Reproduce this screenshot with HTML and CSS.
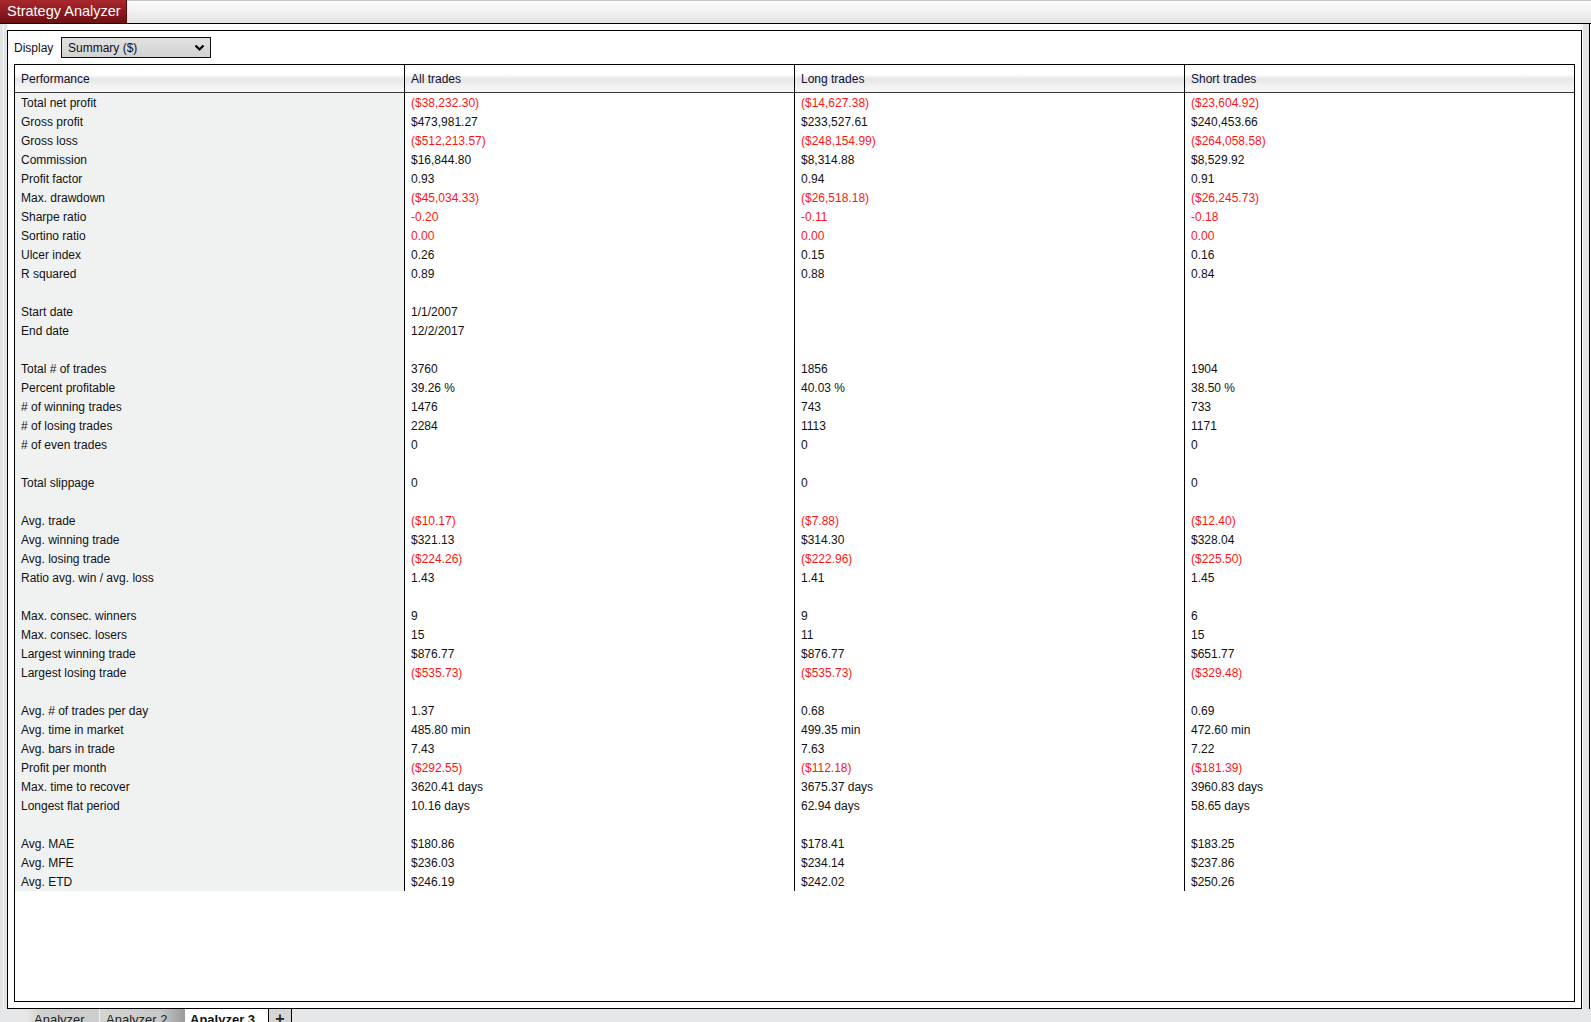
FILE: index.html
```html
<!DOCTYPE html>
<html>
<head>
<meta charset="utf-8">
<link rel="stylesheet" href="styles.css">
</head>
<body>
<div class="topbar">
  <div class="title-tab">Strategy Analyzer</div>
  <div class="topfill"></div>
</div>
<div class="workspace">
  <div class="leftstrip"></div>
  <div class="frame">
    <div class="display-row">
      <span class="display-label">Display</span>
      <div class="select">
        <span>Summary ($)</span>
        <svg class="chev" width="11" height="8" viewBox="0 0 11 8"><path d="M1.5 1.5 L5.5 5.5 L9.5 1.5" fill="none" stroke="#000" stroke-width="2.2"/></svg>
      </div>
    </div>
    <div class="table">
      <div class="row head">
        <div class="c">Performance</div><div class="c">All trades</div><div class="c">Long trades</div><div class="c">Short trades</div>
      </div>
      <div id="rows"></div>
    </div>
  </div>
  <div class="rightstrip"><div class="rightpanel"></div></div>
</div>
<div class="bottombar">
  <div class="btab t1">Analyzer</div>
  <div class="btab t2">Analyzer 2</div>
  <div class="btab t3">Analyzer 3</div>
  <div class="btab tplus">+</div>
</div>
<script src="app.js"></script>
</body>
</html>
```
FILE: app.js
```js
var data = [
 ["Total net profit","r($38,232.30)","r($14,627.38)","r($23,604.92)"],
 ["Gross profit","$473,981.27","$233,527.61","$240,453.66"],
 ["Gross loss","r($512,213.57)","r($248,154.99)","r($264,058.58)"],
 ["Commission","$16,844.80","$8,314.88","$8,529.92"],
 ["Profit factor","0.93","0.94","0.91"],
 ["Max. drawdown","r($45,034.33)","r($26,518.18)","r($26,245.73)"],
 ["Sharpe ratio","r-0.20","r-0.11","r-0.18"],
 ["Sortino ratio","r0.00","r0.00","r0.00"],
 ["Ulcer index","0.26","0.15","0.16"],
 ["R squared","0.89","0.88","0.84"],
 ["","","",""],
 ["Start date","1/1/2007","",""],
 ["End date","12/2/2017","",""],
 ["","","",""],
 ["Total # of trades","3760","1856","1904"],
 ["Percent profitable","39.26 %","40.03 %","38.50 %"],
 ["# of winning trades","1476","743","733"],
 ["# of losing trades","2284","1113","1171"],
 ["# of even trades","0","0","0"],
 ["","","",""],
 ["Total slippage","0","0","0"],
 ["","","",""],
 ["Avg. trade","r($10.17)","r($7.88)","r($12.40)"],
 ["Avg. winning trade","$321.13","$314.30","$328.04"],
 ["Avg. losing trade","r($224.26)","r($222.96)","r($225.50)"],
 ["Ratio avg. win / avg. loss","1.43","1.41","1.45"],
 ["","","",""],
 ["Max. consec. winners","9","9","6"],
 ["Max. consec. losers","15","11","15"],
 ["Largest winning trade","$876.77","$876.77","$651.77"],
 ["Largest losing trade","r($535.73)","r($535.73)","r($329.48)"],
 ["","","",""],
 ["Avg. # of trades per day","1.37","0.68","0.69"],
 ["Avg. time in market","485.80 min","499.35 min","472.60 min"],
 ["Avg. bars in trade","7.43","7.63","7.22"],
 ["Profit per month","r($292.55)","r($112.18)","r($181.39)"],
 ["Max. time to recover","3620.41 days","3675.37 days","3960.83 days"],
 ["Longest flat period","10.16 days","62.94 days","58.65 days"],
 ["","","",""],
 ["Avg. MAE","$180.86","$178.41","$183.25"],
 ["Avg. MFE","$236.03","$234.14","$237.86"],
 ["Avg. ETD","$246.19","$242.02","$250.26"]
];
var host = document.getElementById("rows");
data.forEach(function (r) {
  var row = document.createElement("div");
  row.className = "row";
  r.forEach(function (v, i) {
    var c = document.createElement("div");
    c.className = "c";
    if (i > 0 && v.charAt(0) === "r") { c.className += " neg"; v = v.slice(1); }
    c.textContent = v;
    row.appendChild(c);
  });
  host.appendChild(row);
});
```
FILE: styles.css
```css
html, body {
  margin: 0;
  padding: 0;
}
body {
  width: 1591px;
  height: 1022px;
  overflow: hidden;
  background: #e6e7e8;
  font-family: "Liberation Sans", Arial, sans-serif;
  font-size: 12px;
  color: #111;
}
.topbar {
  display: flex;
  height: 23px;
  border-bottom: 1px solid #000;
}
.title-tab {
  width: 119px;
  height: 23px;
  padding-left: 7px;
  background: linear-gradient(to bottom, #a8282d 0%, #8e1a1f 50%, #6f1014 100%);
  color: #fff;
  font-size: 14.5px;
  line-height: 23px;
  white-space: nowrap;
  border-right: 1px solid #5a0c0f;
}
.topfill {
  flex: 1;
  border-top: 1px solid #c4c4c4;
  background: linear-gradient(to bottom, #fbfbfb 0%, #eeeeee 60%, #e4e5e6 100%);
}
.workspace {
  display: flex;
  height: 985px;
  background: #fff;
}
.leftstrip {
  width: 7px;
  background: linear-gradient(to right, #e2e3e4 0, #e2e3e4 3px, #f4f4f4 3px, #f4f4f4 4px, #e2e3e4 4px);
}
.frame {
  margin-top: 6px;
  width: 1561px;
  height: 965px;
  border: 1px solid #000;
  padding: 6px;
  background: #fff;
  display: flex;
  flex-direction: column;
  gap: 6px;
}
.display-row {
  display: flex;
  align-items: center;
  height: 21px;
}
.display-label {
  width: 47px;
}
.select {
  box-sizing: border-box;
  width: 150px;
  height: 21px;
  border: 1px solid #111;
  background: linear-gradient(to bottom, #e2e2e2 0%, #d2d2d2 100%);
  display: flex;
  align-items: center;
  padding-left: 6px;
  padding-right: 5px;
  justify-content: space-between;
}
.chev {
  display: block;
}
.table {
  box-sizing: border-box;
  width: 1561px;
  height: 938px;
  border: 1px solid #000;
}
.row {
  display: grid;
  grid-template-columns: 389px 390px 390px 390px;
  height: 19px;
}
.row .c {
  box-sizing: border-box;
  height: 19px;
  padding-left: 6px;
  padding-top: 1px;
  line-height: 19px;
  white-space: nowrap;
  overflow: hidden;
}
.row .c + .c {
  border-left: 1px solid #000;
}
.row .c:first-child {
  background: #f0f2f2;
}
.row.head {
  height: 27px;
  border-bottom: 1px solid #3a3a3a;
  background: linear-gradient(to bottom, #ffffff 0%, #ffffff 35%, #e6e6e6 52%, #f1f1f1 75%, #f6f6f6 100%);
}
.row.head .c {
  height: 27px;
  padding-top: 0;
  line-height: 28px;
  color: #101030;
}
.row.head .c:first-child {
  background: transparent;
}
.neg {
  color: #ff1414;
}
.rightstrip {
  width: 6px;
  margin-left: 1px;
  background: #e2e3e4;
  flex: 0 0 auto;
  display: flex;
}
.rightpanel {
  margin-left: 6px;
  width: 2px;
  border-left: 1px solid #000;
  background: #fff;
}
.bottombar {
  display: flex;
  height: 13px;
  padding-left: 28px;
  background: #e6e7e8;
}
.btab {
  height: 14px;
  font-size: 13px;
  line-height: 16px;
  padding-top: 3px;
  white-space: nowrap;
  color: #222;
  box-sizing: border-box;
}
.t1 {
  width: 72px;
  padding-left: 6px;
  background: linear-gradient(to right, #e4e4e4 0%, #cfcfcf 20%, #cdcdcd 100%);
  border-right: 1px solid #f0f0f0;
}
.t2 {
  width: 85px;
  padding-left: 6px;
  background: linear-gradient(to right, #d4d4d4 0%, #c8c8c8 70%, #9a9a9a 100%);
}
.t3 {
  width: 83px;
  padding-left: 5px;
  background: #fff;
  font-weight: bold;
  color: #111;
}
.tplus {
  width: 24px;
  text-align: center;
  background: #d6d6d6;
  border-left: 1px solid #000;
  border-right: 1px solid #000;
  font-weight: bold;
  font-size: 16px;
  line-height: 15px;
  padding-top: 2px;
}
```
